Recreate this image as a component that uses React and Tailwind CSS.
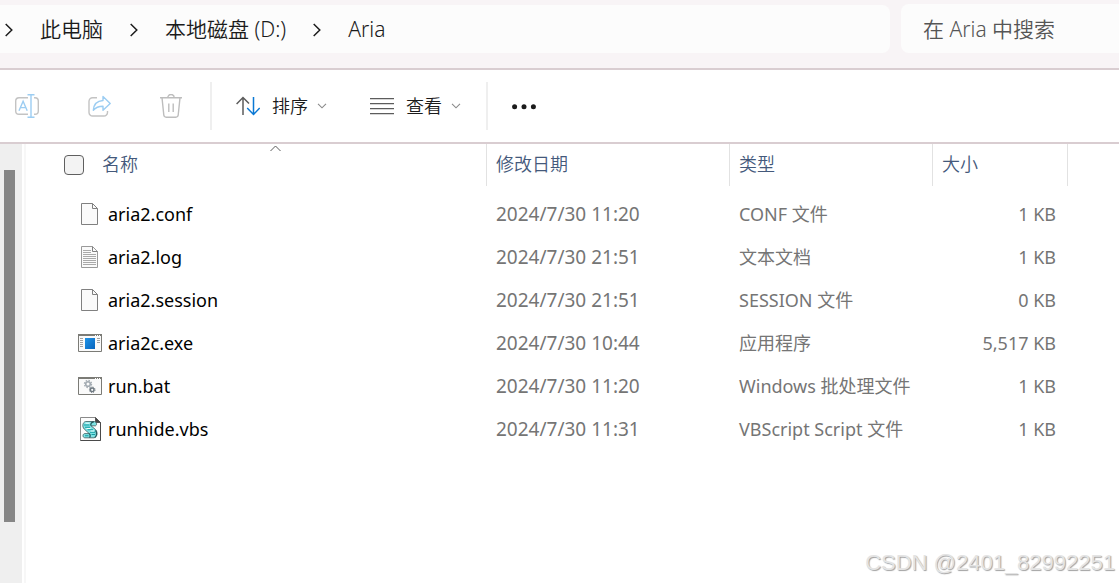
import React from "react";

const files = [
  { name: "aria2.conf", date: "2024/7/30 11:20", type: "CONF 文件", size: "1 KB", icon: "page" },
  { name: "aria2.log", date: "2024/7/30 21:51", type: "文本文档", size: "1 KB", icon: "text" },
  { name: "aria2.session", date: "2024/7/30 21:51", type: "SESSION 文件", size: "0 KB", icon: "page" },
  { name: "aria2c.exe", date: "2024/7/30 10:44", type: "应用程序", size: "5,517 KB", icon: "exe" },
  { name: "run.bat", date: "2024/7/30 11:20", type: "Windows 批处理文件", size: "1 KB", icon: "bat" },
  { name: "runhide.vbs", date: "2024/7/30 11:31", type: "VBScript Script 文件", size: "1 KB", icon: "vbs" },
];

function Chevron() {
  return (
    <svg className="h-[14px] w-2 shrink-0" viewBox="0 0 8 14" fill="none" stroke="currentColor" strokeWidth="1.5" aria-hidden="true">
      <path d="M.7 1 6.8 7 .7 13" />
    </svg>
  );
}

function SmallDown() {
  return (
    <svg className="h-[6px] w-[10px] text-[#8a8a8a]" viewBox="0 0 10 6" fill="none" stroke="currentColor" strokeWidth="1.1" aria-hidden="true">
      <path d="M1 0.8 5 4.8 9 0.8" />
    </svg>
  );
}

function RenameIcon() {
  return (
    <svg className="h-6 w-6" viewBox="0 0 24 24" fill="none" strokeWidth="1.4" aria-hidden="true">
      <path stroke="#c3c3c3" d="M13 20.3H4A3.3 3.3 0 0 1 .7 17V7A3.3 3.3 0 0 1 4 3.7H13M19 3.7H20A3.3 3.3 0 0 1 23.3 7V17A3.3 3.3 0 0 1 20 20.3H19" />
      <path stroke="#9ccdf2" d="M4 16.7 8.1 7.3 12.2 16.7M5.5 13.6H10.7M16 .8V23.2M12.5 .8H19.5M12.5 23.2H19.5" />
    </svg>
  );
}

function ShareIcon() {
  return (
    <svg className="h-6 w-6" viewBox="0 0 24 24" fill="none" strokeWidth="1.4" strokeLinejoin="round" aria-hidden="true">
      <path stroke="#c3c3c3" d="M10 3.7H5.6A3.6 3.6 0 0 0 2 7.3V18.4A3.6 3.6 0 0 0 5.6 22H16.9A3.6 3.6 0 0 0 20.5 18.4V17" />
      <path stroke="#9ccdf2" d="M16 2.5 23.2 9.4 16 16.2V12.2C11.4 12.2 8.6 13.4 6.3 16.3 6.7 10.9 10 6.9 16 6.5Z" />
    </svg>
  );
}

function TrashIcon() {
  return (
    <svg className="h-6 w-6" viewBox="0 0 24 24" fill="none" stroke="#bdbdbd" strokeWidth="1.4" aria-hidden="true">
      <path d="M1 3.7H23M8.8 3.7A3.2 3.2 0 0 1 15.2 3.7M3 3.7 4.8 21A2.5 2.5 0 0 0 7.2 23.2H16.8A2.5 2.5 0 0 0 19.2 21L21 3.7M9.8 9.5V18M14.2 9.5V18" />
    </svg>
  );
}

function SortIcon() {
  return (
    <svg className="h-6 w-6" viewBox="0 0 24 24" fill="none" strokeWidth="1.5" aria-hidden="true">
      <path stroke="#5c5c5c" d="M7 21V3.5M.6 10 7 3.5 13 9.5" />
      <path stroke="#0a78d4" d="M17.5 3V20.5M11.2 14 17.5 20.5 23.7 14" />
    </svg>
  );
}

function ViewIcon() {
  return (
    <svg className="h-6 w-6" viewBox="0 0 24 24" fill="none" stroke="#5c5c5c" strokeWidth="1.3" aria-hidden="true">
      <path d="M0 4.7H24M0 9.7H24M0 14.7H24M0 19.7H24" />
    </svg>
  );
}

function FileIcon({ kind }) {
  if (kind === "page" || kind === "text") {
    return (
      <svg className="h-6 w-6" viewBox="0 0 24 24" fill="none" aria-hidden="true">
        <path d="M3.5 1.5H14.5L19.5 6.5V22.5H3.5Z" fill="#fafafa" stroke={kind === "text" ? "#9a9a9a" : "#808080"} />
        <path d="M14.5 1.5V6.5H19.5" stroke="#808080" />
        {kind === "text" && (
          <path d="M5 5.5H13M5 7.5H13M5 9.5H18M5 11.5H18M5 13.5H18M5 15.5H18M5 17.5H18M5 19.5H18" stroke="#a9a9a9" />
        )}
      </svg>
    );
  }
  if (kind === "exe") {
    return (
      <svg className="h-6 w-6" viewBox="0 0 24 24" fill="none" aria-hidden="true">
        <defs>
          <linearGradient id="exe-tile" x1="0" y1="0" x2="1" y2="1">
            <stop offset="0" stopColor="#1f94e8" />
            <stop offset="1" stopColor="#0864bd" />
          </linearGradient>
        </defs>
        <path d="M.5 3.5H23.5V20.5H.5Z" fill="#fafafa" stroke="#7b7b76" />
        <path d="M0 4H24" stroke="#7b7b76" strokeWidth="2" />
        <path d="M17 4.5H23" stroke="#fff" strokeDasharray="1 1" />
        <path d="M7 7H17V18H7Z" fill="url(#exe-tile)" />
        <path d="M2 7.5H5M2 9.5H5M2 11.5H5M2 13.5H5M2 15.5H5M19 7.5H22M19 9.5H22M19 11.5H22" stroke="#a2a2a2" />
      </svg>
    );
  }
  if (kind === "bat") {
    return (
      <svg className="h-6 w-6" viewBox="0 0 24 24" fill="none" aria-hidden="true">
        <path d="M.5 3.5H23.5V20.5H.5Z" fill="#fafafa" stroke="#7b7b76" />
        <path d="M0 4H24" stroke="#7b7b76" strokeWidth="2" />
        <path d="M17 4.5H23" stroke="#fff" strokeDasharray="1 1" />
        <circle cx="10" cy="10" r="2.3" stroke="#a3abb2" strokeWidth="1.6" />
        <circle cx="10" cy="10" r="3.6" stroke="#a3abb2" strokeWidth="1.2" strokeDasharray="1.5 1.33" />
        <circle cx="14.2" cy="15.8" r="1.8" stroke="#6d7880" strokeWidth="1.4" />
        <circle cx="14.2" cy="15.8" r="2.8" stroke="#6d7880" strokeDasharray="1.2 1" />
      </svg>
    );
  }
  return (
    <svg className="h-6 w-6" viewBox="0 0 24 24" fill="none" aria-hidden="true">
      <path d="M2.5 .5H17.5L22.5 5.5V23.5H2.5Z" fill="#fdfdfd" stroke="#8a8a8a" />
      <path d="M17.5 .5V5.5H22.5Z" fill="#444" stroke="#555" />
      <path d="M22.5 5.5V23.5H2.5" stroke="#4a4a4a" />
      <path d="M7.5 4.5H16C18.5 4.7 19.5 7.8 17.5 8.8H13L17.5 12.5C20.3 15.5 19 20.3 16 20.8H6.8C4.5 20.5 4.4 17.2 6.5 16.6H11.2L6.2 12C3.8 9.5 4.7 5.3 7.5 4.5Z" fill="#7fe3e4" stroke="#3c5c60" strokeWidth=".8" />
      <path d="M13 8.8C12.3 7 13.6 4.8 15.8 5M16.8 20.5C19 19 19 15.5 17.5 13.4M11.2 16.6C12.6 17.8 12.3 19.8 11.5 20.6" stroke="#245a5e" strokeWidth="1.3" />
      <path d="M6 8H11.5M7 10.3H12M9.5 12.7H15M12 15.2H17M13.5 17.5H17M7 18.8H10.5" stroke="#159da3" strokeWidth="1.1" />
      <path d="M7.5 6.2H11.5M8.5 11.5H12.5M12.5 14H16" stroke="#effffe" />
    </svg>
  );
}

function Header({ children }) {
  return (
    <th scope="col" className="h-12 p-0 text-left align-top font-[350]">
      <div className="flex h-[42px] items-center border-r border-[#e2e2e2] pb-0.5 pl-[9px]">{children}</div>
    </th>
  );
}

export default function App() {
  return (
    <div className="relative flex min-h-screen flex-col overflow-hidden bg-white font-['Noto_Sans','Noto_Sans_CJK_SC',sans-serif] text-[#1b1b1b]">
      <header className="flex gap-[11px] border-b-2 border-[#d9cdd1] bg-[#f8f4f6] pt-1 pb-[15px] font-[350]">
        <nav aria-label="路径" className="mt-px flex h-12 flex-1 items-center gap-[27px] rounded-r-lg bg-[#fcfcfc] pt-0.5 pl-[5px] text-[21px] whitespace-nowrap">
          <Chevron />
          <a href="#pc">此电脑</a>
          <Chevron />
          <a href="#d">本地磁盘 (D:)</a>
          <Chevron />
          <a href="#aria">Aria</a>
        </nav>
        <input
          type="search"
          aria-label="搜索"
          placeholder="在 Aria 中搜索"
          className="h-[49px] w-[218px] rounded-l-lg bg-[#fcfcfc] pl-[22px] text-[21px] outline-none placeholder:text-[#555555]"
        />
      </header>

      <div role="toolbar" aria-label="命令" className="flex h-[74px] items-center border-b-2 border-[#d9cdd1] pl-[15px] text-lg font-[350] whitespace-nowrap">
        <div className="flex gap-12">
          <button type="button" aria-label="重命名"><RenameIcon /></button>
          <button type="button" aria-label="共享"><ShareIcon /></button>
          <button type="button" aria-label="删除"><TrashIcon /></button>
        </div>
        <div className="ml-[27px] h-12 w-0.5 bg-[#efefef]" />
        <button type="button" className="ml-6 flex items-center">
          <SortIcon />
          <span className="ml-3">排序</span>
          <span className="ml-[9px]"><SmallDown /></span>
        </button>
        <button type="button" className="ml-[43px] flex items-center">
          <ViewIcon />
          <span className="ml-3">查看</span>
          <span className="ml-[9px]"><SmallDown /></span>
        </button>
        <div className="ml-[25px] h-12 w-0.5 bg-[#efefef]" />
        <button type="button" aria-label="更多" className="ml-6">
          <svg className="h-6 w-6" viewBox="0 0 24 24" fill="#1b1b1b" aria-hidden="true">
            <circle cx="2.6" cy="12.8" r="2.5" />
            <circle cx="12" cy="12.8" r="2.5" />
            <circle cx="21.4" cy="12.8" r="2.5" />
          </svg>
        </button>
      </div>

      <div className="flex flex-1">
        <div className="w-[22px] shrink-0 bg-[#efefef] pt-[26px] pl-1">
          <div className="h-[352px] w-[11px] bg-[#868686]" />
        </div>
        <main className="ml-0.5 min-w-0 flex-1 border-l-2 border-[#f7f7f7]">
          <table className="w-full table-fixed border-collapse text-lg whitespace-nowrap">
            <colgroup>
              <col className="w-[461px]" />
              <col className="w-[243px]" />
              <col className="w-[203px]" />
              <col className="w-[135px]" />
              <col />
            </colgroup>
            <thead className="text-[#44597b]">
              <tr>
                <th scope="col" aria-sort="ascending" className="relative h-12 p-0 text-left align-top font-[350]">
                  <div className="flex h-[42px] items-center border-r border-[#e2e2e2] pl-[38px]">
                    <input type="checkbox" aria-label="全选" className="h-5 w-5 appearance-none rounded border border-[#5f5f5f] bg-[#f3f3f3]" />
                    <span className="ml-[18px] pb-0.5">名称</span>
                  </div>
                  <svg className="absolute top-px left-[244px] h-[7px] w-[11px]" viewBox="0 0 11 7" fill="none" stroke="#5b5b5b" aria-hidden="true">
                    <path d="M.5 6 5.5 1 10.5 6" />
                  </svg>
                </th>
                <Header>修改日期</Header>
                <Header>类型</Header>
                <Header>大小</Header>
                <td className="p-0" />
              </tr>
            </thead>
            <tbody className="text-[#757575]">
              {files.map((f) => (
                <tr key={f.name} className="h-[43px]">
                  <td className="p-0 pl-[52px] text-black">
                    <div className="flex items-center gap-[6px]">
                      <FileIcon kind={f.icon} />
                      <span>{f.name}</span>
                    </div>
                  </td>
                  <td className="p-0 pt-0.5 pl-[9px] text-[19px]">{f.date}</td>
                  <td className="p-0 pl-[9px]">{f.type}</td>
                  <td className="p-0 pr-3 text-right">{f.size}</td>
                  <td className="p-0" />
                </tr>
              ))}
            </tbody>
          </table>
        </main>
      </div>

      <div className="absolute right-1 bottom-1 font-['Liberation_Sans',sans-serif] text-[22px] leading-8 text-[#e4e4e4] [text-shadow:1px_1px_1px_#a0a0a0]">
        CSDN @2401_82992251
      </div>
    </div>
  );
}
